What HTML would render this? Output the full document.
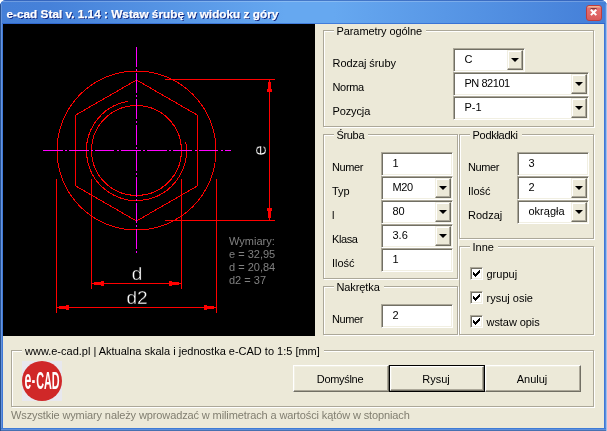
<!DOCTYPE html>
<html lang="pl"><head><meta charset="utf-8"><title>e-cad Stal v. 1.14 : Wstaw śrubę w widoku z góry</title>
<style>
*{box-sizing:border-box;margin:0;padding:0}
html,body{width:607px;height:431px;overflow:hidden;background:#fff}
body{font-family:"Liberation Sans",sans-serif;font-size:11px;color:#000;position:relative}
.abs,.win *{position:absolute}
.win{will-change:transform;position:absolute;left:0;top:0;width:607px;height:431px;background:#3f78d6;border-radius:6px 6px 0 0;overflow:hidden}
.title{left:0;top:0;width:607px;height:24px;background:linear-gradient(90deg,#4580d8 0%,#4681d9 8%,#66a8f0 47%,#66a8f0 55%,#4681d9 97%,#4580d8 100%)}
.title .hl{left:0;top:0;width:607px;height:1px;background:rgba(40,80,170,.55)}
.title .hl2{left:0;top:1px;width:607px;height:1px;background:rgba(255,255,255,.22)}
.title .sh{left:0;top:23px;width:607px;height:1px;background:rgba(20,70,190,.45)}
.ttext{left:6.5px;top:7px;height:14px;line-height:14px;font-weight:bold;font-size:11.8px;-webkit-text-stroke:0.25px #fff;color:#fff;text-shadow:1px 1px 0 #0a1f7a;white-space:nowrap}
.close{left:586px;top:5px;width:16px;height:16px;border-radius:3px;background:linear-gradient(180deg,#f0b090 0,#f0b090 1px,#e47070 2px,#e06666 60%,#d85a5a 100%);border:1px solid #bf3c3c}
.client{left:3px;top:24px;width:601px;height:404px;background:#ece9d8}
.lb{left:0;top:4px;width:2px;height:427px;background:linear-gradient(90deg,#27508f 0,#27508f 1px,#6694dc 1px,#6694dc 2px)}
.rb{left:605px;top:4px;width:2px;height:427px;background:linear-gradient(90deg,#5a8cdc 0,#5a8cdc 1px,#a0c0ec 1px,#a0c0ec 2px)}
.bb{left:1px;top:428px;width:605px;height:3px;background:linear-gradient(180deg,#3f7cd6 0,#3f7cd6 1px,#6090dc 1px,#6090dc 2px,#4870b0 2px,#4870b0 3px)}
.canvas{left:3px;top:24px;width:312px;height:312px;background:#000}
.gb{border:1px solid #aca899;box-shadow:1px 1px 0 #fff, inset 1px 1px 0 #fff}
.lg{background:#ece9d8;height:13px;line-height:13px;padding:0 4px 0 3px;white-space:nowrap}
.t{height:13px;line-height:13px;white-space:nowrap}
.gray{color:#807e70}
.edit{background:#fff;border:1px solid;border-color:#aca899 #fff #fff #aca899;box-shadow:inset 1px 1px 0 #716f64, inset -1px -1px 0 #f1efe2}
.btn{background:#ece9d8;border:1px solid;border-color:#fff #716f64 #716f64 #fff;box-shadow:inset -1px -1px 0 #aca899, inset 1px 1px 0 #f1efe2}
.cbtn{background:#ece9d8;border:1px solid;border-color:#f1efe2 #716f64 #716f64 #f1efe2;box-shadow:inset -1px -1px 0 #aca899, inset 1px 1px 0 #fff}
.arr{width:0;height:0;border-left:4px solid transparent;border-right:4px solid transparent;border-top:4px solid #000}
.pb{text-align:center}
.chk{width:13px;height:13px;background:#fff;border:1px solid;border-color:#aca899 #fff #fff #aca899;box-shadow:inset 1px 1px 0 #716f64, inset -1px -1px 0 #f1efe2}
</style></head><body>
<div class="win">
<div class="title"><div class="hl"></div><div class="hl2"></div><div class="sh"></div>
<div class="ttext">e-cad Stal v. 1.14 : Wstaw śrubę w widoku z góry</div>
<div class="close"><svg style="left:0;top:0" width="14" height="14" viewBox="0 0 14 14"><path d="M3.6 2.7 L9.6 2.7" stroke="#5a2020" stroke-width="1.2" fill="none" opacity=".7"/><path d="M3.9 3.7 L9.3 9.1 M9.3 3.7 L3.9 9.1" stroke="#fff" stroke-width="2" fill="none"/></svg></div>
</div>
<div class="lb"></div><div class="rb"></div><div class="bb"></div>
<div class="client"></div>
<div class="canvas"></div>

<svg class="abs" style="left:3px;top:24px" width="312" height="312" viewBox="3 24 312 312" shape-rendering="crispEdges" fill="none" stroke-width="1">
<g stroke="#ff0000">
<circle cx="136.5" cy="150.5" r="79.5"/>
<polygon points="136.5,80.0 75.4,115.2 75.4,185.8 136.5,221.0 197.6,185.8 197.6,115.2"/>
<circle cx="136.5" cy="150.5" r="45"/>
<path d="M127.8 101.3 A50 50 0 1 0 185.7 141.8"/>
<line x1="56.5" y1="179" x2="56.5" y2="313"/>
<line x1="216.5" y1="179" x2="216.5" y2="313"/>
<line x1="91.5" y1="179" x2="91.5" y2="289"/>
<line x1="181.5" y1="179" x2="181.5" y2="289"/>
<line x1="91" y1="283.5" x2="182" y2="283.5"/>
<line x1="56" y1="307.5" x2="217" y2="307.5"/>
<line x1="165" y1="79.5" x2="275" y2="79.5"/>
<line x1="165" y1="220.5" x2="275" y2="220.5"/>
<line x1="269.5" y1="79" x2="269.5" y2="221"/>
</g>
<g fill="#ff0000" stroke="none">
<rect x="94" y="282" width="7" height="3"/><rect x="101" y="281" width="3" height="5"/>
<rect x="172" y="282" width="7" height="3"/><rect x="169" y="281" width="3" height="5"/>
<rect x="59" y="306" width="7" height="3"/><rect x="66" y="305" width="3" height="5"/>
<rect x="207" y="306" width="7" height="3"/><rect x="204" y="305" width="3" height="5"/>
<rect x="268" y="82" width="3" height="7"/><rect x="267" y="89" width="5" height="3"/>
<rect x="268" y="211" width="3" height="7"/><rect x="267" y="208" width="5" height="3"/>
</g>
<g stroke="#ff00ff">
<line x1="43" y1="150.5" x2="231" y2="150.5" stroke-dasharray="19.5 2.5 2 2"/>
<line x1="136.5" y1="47" x2="136.5" y2="253" stroke-dasharray="19.5 2.5 2 2"/>
</g>
<g fill="#fff" stroke="#000" stroke-width="0.35" font-family='"Liberation Sans", sans-serif' font-size="19" text-anchor="middle">
<text x="137" y="280">d</text><text x="137" y="304">d2</text>
<text transform="translate(266 150.5) rotate(-90)" x="0" y="0">e</text>
</g>
<g fill="#808080" stroke="none" font-family='"Liberation Sans", sans-serif' font-size="11">
<text x="229" y="245">Wymiary:</text>
<text x="229" y="258">e = 32,95</text>
<text x="229" y="271">d = 20,84</text>
<text x="229" y="284">d2 = 37</text>
</g>
</svg>
<div class="gb" style="left:323px;top:30px;width:271px;height:97px"></div>
<div class="lg" style="left:333.5px;top:25px;letter-spacing:-0.083px">Parametry ogólne</div>
<div class="gb" style="left:323px;top:134px;width:135px;height:145px"></div>
<div class="lg" style="left:333.5px;top:129px;letter-spacing:-0.332px">Śruba</div>
<div class="gb" style="left:323px;top:286px;width:135px;height:49px"></div>
<div class="lg" style="left:333.5px;top:281px;letter-spacing:-0.104px">Nakrętka</div>
<div class="gb" style="left:459px;top:134px;width:135px;height:105px"></div>
<div class="lg" style="left:469.5px;top:129px;letter-spacing:-0.289px">Podkładki</div>
<div class="gb" style="left:459px;top:246px;width:135px;height:89px"></div>
<div class="lg" style="left:469.5px;top:241px">Inne</div>
<div class="gb" style="left:11px;top:350px;width:583px;height:57px"></div>
<div class="lg" style="left:22px;top:345px;letter-spacing:-0.005px">www.e-cad.pl | Aktualna skala i jednostka e-CAD to 1:5 [mm]</div>
<div class="t " style="left:332.5px;top:57px;letter-spacing:-0.067px">Rodzaj śruby</div>
<div class="edit" style="left:453px;top:48px;width:72px;height:24px"><div class="t" style="left:10.5px;top:4px">C</div><div class="cbtn" style="right:1px;top:1px;width:16px;height:20px"><div class="arr" style="left:3px;top:7px"></div></div></div>
<div class="t " style="left:332.5px;top:81px;letter-spacing:-0.323px">Norma</div>
<div class="edit" style="left:453px;top:72px;width:136px;height:24px"><div class="t" style="left:10.5px;top:4px;letter-spacing:-0.467px">PN 82101</div><div class="cbtn" style="right:1px;top:1px;width:16px;height:20px"><div class="arr" style="left:3px;top:7px"></div></div></div>
<div class="t " style="left:332.5px;top:105px;letter-spacing:-0.119px">Pozycja</div>
<div class="edit" style="left:453px;top:96px;width:136px;height:24px"><div class="t" style="left:10.5px;top:4px">P-1</div><div class="cbtn" style="right:1px;top:1px;width:16px;height:20px"><div class="arr" style="left:3px;top:7px"></div></div></div>
<div class="t " style="left:332px;top:161px;letter-spacing:-0.403px">Numer</div>
<div class="edit" style="left:381px;top:152px;width:72px;height:24px"><div class="t" style="left:10.5px;top:4px">1</div></div>
<div class="t " style="left:332px;top:185px">Typ</div>
<div class="edit" style="left:381px;top:176px;width:72px;height:24px"><div class="t" style="left:10.5px;top:4px;letter-spacing:-0.369px">M20</div><div class="cbtn" style="right:1px;top:1px;width:16px;height:20px"><div class="arr" style="left:3px;top:7px"></div></div></div>
<div class="t " style="left:332px;top:209px">l</div>
<div class="edit" style="left:381px;top:200px;width:72px;height:24px"><div class="t" style="left:10.5px;top:4px">80</div><div class="cbtn" style="right:1px;top:1px;width:16px;height:20px"><div class="arr" style="left:3px;top:7px"></div></div></div>
<div class="t " style="left:332px;top:233px;letter-spacing:-0.386px">Klasa</div>
<div class="edit" style="left:381px;top:224px;width:72px;height:24px"><div class="t" style="left:10.5px;top:4px">3.6</div><div class="cbtn" style="right:1px;top:1px;width:16px;height:20px"><div class="arr" style="left:3px;top:7px"></div></div></div>
<div class="t " style="left:332px;top:257px">Ilość</div>
<div class="edit" style="left:381px;top:248px;width:72px;height:24px"><div class="t" style="left:10.5px;top:4px">1</div></div>
<div class="t " style="left:332px;top:313px;letter-spacing:-0.403px">Numer</div>
<div class="edit" style="left:381px;top:304px;width:72px;height:24px"><div class="t" style="left:10.5px;top:4px">2</div></div>
<div class="t " style="left:468px;top:161px;letter-spacing:-0.403px">Numer</div>
<div class="edit" style="left:517px;top:152px;width:72px;height:24px"><div class="t" style="left:10.5px;top:4px">3</div></div>
<div class="t " style="left:468px;top:185px">Ilość</div>
<div class="edit" style="left:517px;top:176px;width:72px;height:24px"><div class="t" style="left:10.5px;top:4px">2</div><div class="cbtn" style="right:1px;top:1px;width:16px;height:20px"><div class="arr" style="left:3px;top:7px"></div></div></div>
<div class="t " style="left:468px;top:209px">Rodzaj</div>
<div class="edit" style="left:517px;top:200px;width:72px;height:24px"><div class="t" style="left:10.5px;top:4px">okrągła</div><div class="cbtn" style="right:1px;top:1px;width:16px;height:20px"><div class="arr" style="left:3px;top:7px"></div></div></div>
<div class="chk" style="left:470px;top:267px"><svg style="left:1px;top:1px" width="9" height="9" viewBox="0 0 9 9" shape-rendering="crispEdges"><path d="M1 3v3M2 4v3M3 5v3M4 4v3M5 3v3M6 2v3M7 1v3" stroke="#000" stroke-width="1" fill="none" transform="translate(0.5 0)"/></svg></div>
<div class="t " style="left:486.5px;top:268px">grupuj</div>
<div class="chk" style="left:470px;top:291px"><svg style="left:1px;top:1px" width="9" height="9" viewBox="0 0 9 9" shape-rendering="crispEdges"><path d="M1 3v3M2 4v3M3 5v3M4 4v3M5 3v3M6 2v3M7 1v3" stroke="#000" stroke-width="1" fill="none" transform="translate(0.5 0)"/></svg></div>
<div class="t " style="left:486.5px;top:292px">rysuj osie</div>
<div class="chk" style="left:470px;top:315px"><svg style="left:1px;top:1px" width="9" height="9" viewBox="0 0 9 9" shape-rendering="crispEdges"><path d="M1 3v3M2 4v3M3 5v3M4 4v3M5 3v3M6 2v3M7 1v3" stroke="#000" stroke-width="1" fill="none" transform="translate(0.5 0)"/></svg></div>
<div class="t " style="left:486.5px;top:316px;letter-spacing:-0.060px">wstaw opis</div>
<div class="btn pb" style="left:293px;top:365px;width:96px;height:27px;line-height:27px;padding-right:2px;letter-spacing:-0.313px">Domyślne</div>
<div style="left:389px;top:365px;width:96px;height:27px;background:#000"></div>
<div class="btn pb" style="left:390px;top:366px;width:94px;height:25px;line-height:25px;padding-right:2px">Rysuj</div>
<div class="btn pb" style="left:485px;top:365px;width:96px;height:27px;line-height:27px;padding-right:2px">Anuluj</div>
<div style="left:22px;top:361px;width:40px;height:40px;background:#e8e8ee"></div>
<svg class="abs" style="left:22px;top:361px" width="40" height="40" viewBox="0 0 40 40"><circle cx="20" cy="20" r="20" fill="#d02828"/><g fill="#fff" font-family='"Liberation Sans", sans-serif' font-weight="bold"><text x="2.4" y="28.3" font-size="28" textLength="6.8" lengthAdjust="spacingAndGlyphs">e</text><text x="9.8" y="27" font-size="24" textLength="3.4" lengthAdjust="spacingAndGlyphs">-</text><text x="14.2" y="28" font-size="24" textLength="23.4" lengthAdjust="spacingAndGlyphs">CAD</text></g></svg>
<div class="t gray" style="left:11px;top:409px;letter-spacing:-0.115px">Wszystkie wymiary należy wprowadzać w milimetrach a wartości kątów w stopniach</div>
</div></body></html>
